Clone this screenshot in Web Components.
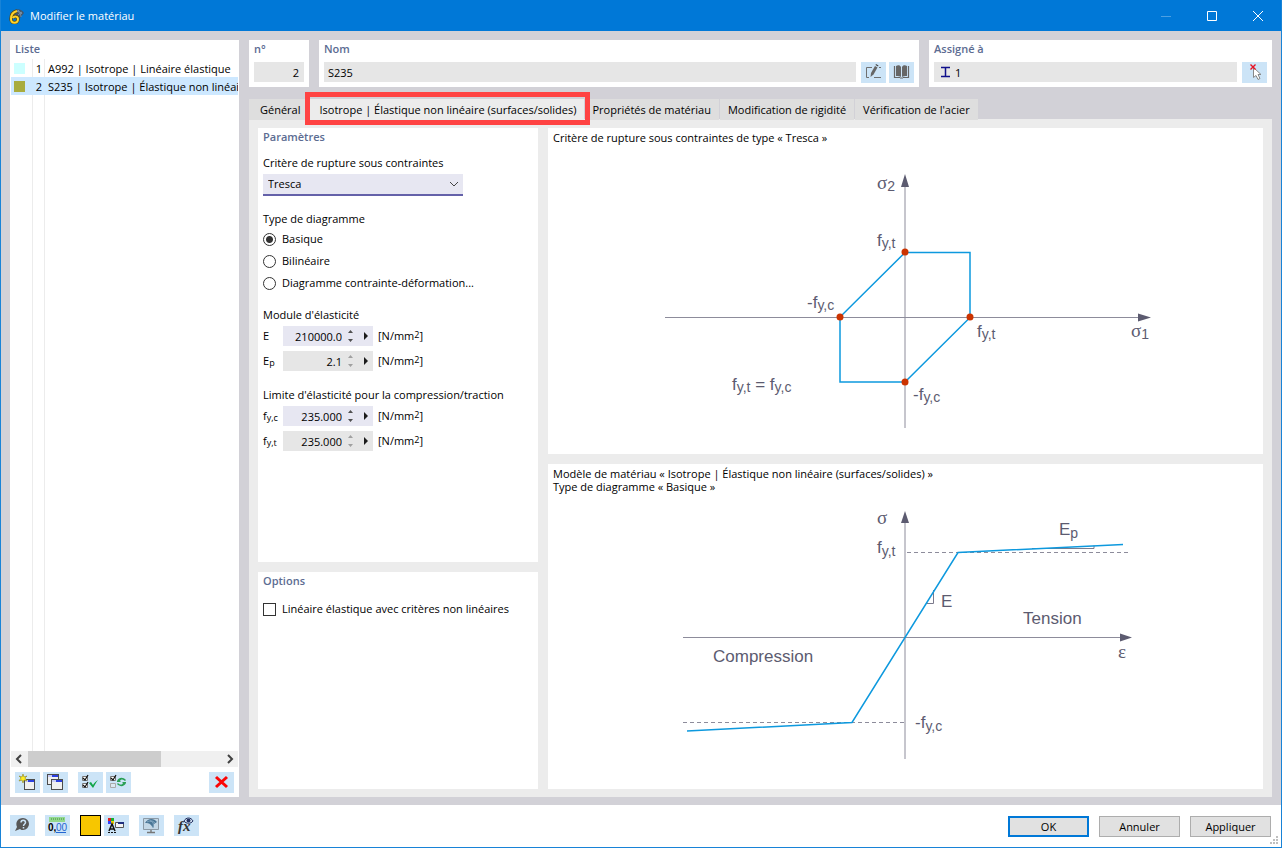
<!DOCTYPE html>
<html lang="fr">
<head>
<meta charset="utf-8">
<meta name="viewport" content="width=device-width, initial-scale=1">
<title>Modifier le matériau</title>
<style>
    body {
        margin: 0;
        font-family: "Open Sans", "Noto Sans", sans-serif;
        font-size: 11px;
        line-height: 18px;
        color: #000;
    }
</style>
</head>
<body>
<material-dialog></material-dialog>

<script>
    // Icons are drawn on the 25x21 face of a tool button
    const ICONS = {
        create: `
            <rect x="9.500" y="7.500" width="10" height="10" fill="#f0f0f0" stroke="#4c4c4c"/>
            <path d="M10 8h3v2h-3z" fill="#c9cdf5"/><path d="M13 8h6v2h-6z" fill="#2c40e0"/>
            <path d="M8 2l1 3 3-1-2 2 2 3-3-1-1 3-1-3-3 1 2-3-2-2 3 1z" fill="#ffee22" stroke="#8a8320" stroke-width=".6"/>`,
        copy: `
            <rect x="4.500" y="2.500" width="11" height="10" fill="#f0f0f0" stroke="#4c4c4c"/>
            <path d="M5 3h4v2H5z" fill="#c9cdf5"/><path d="M9 3h6v2H9z" fill="#2c40e0"/>
            <rect x="8.500" y="7.500" width="11" height="10" fill="#f0f0f0" stroke="#4c4c4c"/>
            <path d="M9 8h4v2H9z" fill="#c9cdf5"/><path d="M13 8h6v2h-6z" fill="#2c40e0"/>`,
        checkAll: `
            <path d="M4.500 4.500h5v4h-5zM4.500 11.500h5v4h-5z" fill="#fff" stroke="#777"/>
            <path d="M5 6l2 2 3-5M5 13l2 2 3-5" fill="none" stroke="#111" stroke-width="1.200"/>
            <path d="M11 11l2-1 2 3c1-2 3-4 5-5-2 2-3 5-5 8z" fill="#12a548"/>`,
        checkSwap: `
            <path d="M4.500 4.500h5v4h-5z" fill="#fff" stroke="#777"/>
            <path d="M4.500 11.500h5v4h-5z" fill="#dce9f3" stroke="#aaa"/>
            <path d="M5 6l2 2 3-5" fill="none" stroke="#111" stroke-width="1.200"/>
            <path d="M11 9c2-4 6-4 9-1l-1 1c-2-2-4-2-5 0l1 1h-4V6zM20 11c-2 4-6 4-9 1l1-1c2 2 4 2 5 0l-1-1h4v4z" fill="#2ba055"/>`,
        remove: `<path d="M7 5l11 10M18 5L7 15" stroke="#fb0505" stroke-width="3" fill="none"/>`,
        rename: `
            <path d="M11 5.500H5.500v10H8M13 15.500h7M18 5.500h2" fill="none" stroke="#707070"/>
            <path d="M10 11l4-7 2.500 1.500-4 7-3 2.500z" fill="#666"/>
            <path d="M14.500 3l.5-1 2.500 1.500-.5 1z" fill="#444"/>`,
        library: `
            <path d="M7 4c2-1 4-1 5 1v10c-1-1-3-1-5-1zM18 4c-2-1-4-1-5 1v10c1-1 3-1 5-1z" fill="#666"/>
            <path d="M5.500 4v11.500h5.500M19.500 4v11.500H14M11 16h3" fill="none" stroke="#666" stroke-width="1.200"/>`,
        unpick: `
            <path d="M11.500 5.500v10l2.500-2 2 4 2-1-2-4h3z" fill="#fff" stroke="#888"/>
            <path d="M8.500 2.500l5 5M13.500 2.500l-5 5" stroke="#e81123" stroke-width="1.400"/>`,
        help: `
            <path d="M13 3a6 6 0 0 1 0 12c-1 0-2 0-3-1l-5 2 2-4C5 7 8 3 13 3z" fill="#585858"/>
            <path d="M11 7.500c0-3 4.500-3 4.500 0 0 1.500-2 1.500-2 3.500M13.500 12v1.500" fill="none" stroke="#cce4f7" stroke-width="1.500"/>`,
        units: `
            <path d="M4 2h16v5H4z" fill="#93d98d"/>
            <path d="M6.500 3v2M8.500 3v2M10.500 3v2M12.500 3v2M14.500 3v2M16.500 3v2M18.500 3v2" stroke="#5da759" stroke-width=".8"/>
            <text x="3" y="16" font-size="10" font-weight="700" font-family="Liberation Sans, sans-serif">0,</text>
            <text x="11" y="16" font-size="10" font-family="Liberation Sans, sans-serif" fill="#2366d1">00</text>
            <path d="M11 17.500h10" stroke="#2366d1"/>`,
        display: `
            <path d="M4 3h3v3H4z" fill="#e02020"/><path d="M7 3h3v3H7z" fill="#16b030"/>
            <path d="M4 6h3v3H4z" fill="#3040ff"/><path d="M7 6h3v3H7z" fill="#f0d000"/>
            <path d="M5 16l3-7 3 7M6 14h4" fill="none" stroke="#111" stroke-width="1.500"/>
            <path d="M4 17.500h8" stroke="#111" stroke-dasharray="2 1"/>
            <path d="M11.500 7.500h8v5h-8z" fill="#f4f4f4" stroke="#555"/>
            <path d="M14 7h6v2h-6z" fill="#203080"/>`,
        view: `
            <path d="M4.500 3.500h15v11h-15z" fill="#c3d7e6" stroke="#8b99a5"/>
            <path d="M12 15v3M8 17.500h8" stroke="#777" stroke-width="1.400" fill="none"/>
            <path d="M6 8c3-5 9-5 12-1l-3 2c0 2 0 3-1 4l-2-3c-2-2-4-2-6-2z" fill="#4a7696"/>
            <path d="M8 7c4-2 6-1 8 1M11 6c3 0 4 3 3 6" fill="none" stroke="#a6c6dc" stroke-width=".6"/>`,
        formula: `
            <text x="4" y="16" font-size="15" font-weight="700" font-style="italic" font-family="Liberation Serif, serif" fill="#333">fx</text>
            <path d="M10 6c2-4 7-4 9 0-2 3-7 3-9 0z" fill="#d6e4f4" stroke="#223060"/>
            <circle cx="14.500" cy="5.500" r="2" fill="#223060"/>`
    };

    class ToolButton extends HTMLElement {
        connectedCallback() {
            this.attachShadow({ mode: 'open' });

            this.shadowRoot.innerHTML = `
                <style>
                    :host {
                        display: block;
                        flex: none;
                    }

                    button {
                        display: block;
                        width: 25px;
                        height: 21px;
                        padding: 0;
                        border: 0;
                        background: #cce4f7;
                    }

                    button:hover {
                        background: #b5d8f3;
                    }

                    svg {
                        display: block;
                    }
                </style>

                <button type="button" aria-label="${this.getAttribute('label')}">
                    <svg width="25" height="21" viewBox="0 0 25 21">${ICONS[this.getAttribute('icon')]}</svg>
                </button>
            `;
        }
    }

    class TitleBar extends HTMLElement {
        connectedCallback() {
            this.attachShadow({ mode: 'open' });

            this.shadowRoot.innerHTML = `
                <style>
                    :host {
                        display: flex;
                        align-items: center;
                        height: 31px;
                        padding-left: 8px;
                        gap: 5px;
                        background: #0078d7;
                        color: #fff;
                    }

                    h1 {
                        flex: 1;
                        margin: 0;
                        font-size: 11px;
                        font-weight: 400;
                    }

                    button {
                        width: 46px;
                        height: 31px;
                        padding: 0;
                        border: 0;
                        background: none;
                        color: #fff;
                    }

                    button:disabled {
                        color: #4ca0e3;
                    }

                    .controls {
                        display: flex;
                    }

                    svg {
                        display: block;
                        margin: auto;
                    }
                </style>

                <svg style="margin: 0" width="16" height="16" viewBox="0 0 16 16">
                    <path d="M3 6C5 0 12 0 15 5l-4 5z" fill="#41576d"/>
                    <path d="M4 6c3-4 6-4 9 0M7 3c3 0 5 3 5 6M10 2L7 5M13 4l-4 3" fill="none" stroke="#92a8ba" stroke-width=".7"/>
                    <path d="M8 3C4 4 2 7 2 11c0 5 7 5 7 0 0-3-4-3-5-1" fill="none" stroke="#5b4a10" stroke-width="3.500"/>
                    <path d="M8 3C4 4 2 7 2 11c0 5 7 5 7 0 0-3-4-3-5-1" fill="none" stroke="#ffd42a" stroke-width="2"/>
                </svg>
                <h1><slot></slot></h1>
                <div class="controls">
                    <button type="button" aria-label="Réduire" disabled>
                        <svg width="10" height="10"><path d="M0 5.500h10" stroke="currentColor"/></svg>
                    </button>
                    <button type="button" aria-label="Agrandir">
                        <svg width="10" height="10"><path d="M.5.500h9v9h-9z" fill="none" stroke="currentColor"/></svg>
                    </button>
                    <button type="button" aria-label="Fermer">
                        <svg width="10" height="10"><path d="M0 0l10 10M10 0L0 10" stroke="currentColor"/></svg>
                    </button>
                </div>
            `;
        }
    }

    class PanelCard extends HTMLElement {
        connectedCallback() {
            this.attachShadow({ mode: 'open' });

            this.shadowRoot.innerHTML = `
                <style>
                    :host {
                        display: flex;
                        flex-direction: column;
                        min-width: 0;
                        padding: 0 5px 4px;
                        box-sizing: border-box;
                        background: #fff;
                    }

                    h2 {
                        margin: 0;
                        font-size: 11px;
                        line-height: 18px;
                        font-weight: 600;
                        color: #5c6c92;
                    }
                </style>

                <h2>${this.getAttribute('heading')}</h2>
                <slot></slot>
            `;
        }
    }

    class TextField extends HTMLElement {
        connectedCallback() {
            this.attachShadow({ mode: 'open' });

            this.shadowRoot.innerHTML = `
                <style>
                    :host {
                        display: flex;
                        align-items: center;
                        flex: 1;
                        min-width: 0;
                        height: 20px;
                        background: #e6e6e6;
                    }

                    ::slotted(svg) {
                        flex: none;
                        margin-left: 6px;
                    }

                    input {
                        flex: 1;
                        min-width: 0;
                        height: 20px;
                        box-sizing: border-box;
                        padding: 0 5px 0 4px;
                        border: 0;
                        background: none;
                        font: inherit;
                        color: inherit;
                        text-align: inherit;
                    }
                </style>

                <slot></slot>
                <input type="text" readonly aria-label="${this.getAttribute('label')}" value="${this.getAttribute('value')}">
            `;
        }
    }

    class MaterialList extends HTMLElement {
        connectedCallback() {
            this.attachShadow({ mode: 'open' });

            this.shadowRoot.innerHTML = `
                <style>
                    :host {
                        display: flex;
                        flex-direction: column;
                        min-height: 0;
                        background: #fff;
                    }

                    h2 {
                        margin: 0;
                        padding: 0 5px 1px;
                        font-size: 11px;
                        line-height: 18px;
                        font-weight: 600;
                        color: #5c6c92;
                    }

                    /* column rules run down the whole list */
                    .rows {
                        flex: 1;
                        margin: 0 1px;
                        overflow: hidden;
                        background:
                            linear-gradient(#ececec, #ececec) 21px 0 / 1px 100% no-repeat,
                            linear-gradient(#ececec, #ececec) 33px 0 / 1px 100% no-repeat;
                    }

                    table {
                        width: 100%;
                        table-layout: fixed;
                        border-collapse: collapse;
                    }

                    td {
                        height: 18px;
                        padding: 2px 0 0;
                        box-sizing: border-box;
                        line-height: 16px;
                        white-space: nowrap;
                        overflow: hidden;
                    }

                    .color { padding: 0; }
                    .number { text-align: right; }
                    .name { padding-left: 6px; }

                    .color i {
                        display: block;
                        width: 11px;
                        height: 11px;
                        margin-left: 3px;
                    }

                    .selected {
                        background: #cde8ff;
                    }

                    .scroll {
                        display: flex;
                        align-items: center;
                        height: 16px;
                        margin: 0 1px;
                        background: #f0f0f0;
                    }

                    .track {
                        flex: 1;
                        height: 16px;
                    }

                    .thumb {
                        width: 69%;
                        height: 16px;
                        background: #cdcdcd;
                    }

                    .tools {
                        display: flex;
                        gap: 3px;
                        padding: 5px 5px 4px;
                    }

                    .gap { margin-left: 7px; }
                    .end { margin-left: auto; }
                </style>

                <h2>Liste</h2>
                <div class="rows">
                    <table>
                        <colgroup><col style="width: 21px"><col style="width: 10px"><col></colgroup>
                        <tr>
                            <td class="color"><i style="background: #ccffff"></i></td>
                            <td class="number">1</td>
                            <td class="name">A992 | Isotrope | Linéaire élastique</td>
                        </tr>
                        <tr class="selected">
                            <td class="color"><i style="background: #a9ac3e"></i></td>
                            <td class="number">2</td>
                            <td class="name">S235 | Isotrope | Élastique non linéaire (surfaces/solides)</td>
                        </tr>
                    </table>
                </div>
                <div class="scroll">
                    <svg width="17" height="16"><path d="M10 4L6 8l4 4" fill="none" stroke="#404040" stroke-width="2"/></svg>
                    <div class="track"><div class="thumb"></div></div>
                    <svg width="17" height="16"><path d="M7 4l4 4-4 4" fill="none" stroke="#404040" stroke-width="2"/></svg>
                </div>
                <div class="tools">
                    <tool-button icon="create" label="Nouveau matériau"></tool-button>
                    <tool-button icon="copy" label="Copier"></tool-button>
                    <tool-button class="gap" icon="checkAll" label="Tout sélectionner"></tool-button>
                    <tool-button icon="checkSwap" label="Inverser la sélection"></tool-button>
                    <tool-button class="end" icon="remove" label="Supprimer"></tool-button>
                </div>
            `;
        }
    }

    class TabStrip extends HTMLElement {
        connectedCallback() {
            this.attachShadow({ mode: 'open' });

            this.shadowRoot.innerHTML = `
                <style>
                    :host {
                        position: relative;
                        z-index: 1;
                        display: flex;
                        gap: 1px;
                    }

                    button {
                        position: relative;
                        height: 21px;
                        padding: 0 8px;
                        border: 0;
                        background: #dedede;
                        font: inherit;
                        color: inherit;
                        white-space: nowrap;
                    }

                    .first {
                        padding-left: 11px;
                    }

                    button[aria-selected="true"] {
                        z-index: 1;
                        padding: 0 7px 0 10px;
                        background: #ececec;
                    }

                    /* red frame over the active tab */
                    button[aria-selected="true"]::after {
                        content: "";
                        position: absolute;
                        inset: -7px -6px -5px -4px;
                        border: 5px solid #ff4343;
                    }
                </style>

                <button class="first" type="button" role="tab">Général</button>
                <button type="button" role="tab" aria-selected="true">Isotrope | Élastique non linéaire (surfaces/solides)</button>
                <button type="button" role="tab">Propriétés de matériau</button>
                <button type="button" role="tab">Modification de rigidité</button>
                <button type="button" role="tab">Vérification de l'acier</button>
            `;
        }
    }

    class NumberField extends HTMLElement {
        connectedCallback() {
            const off = this.hasAttribute('off');
            const arrow = off ? '#a0a0a0' : '#505050';

            this.attachShadow({ mode: 'open' });

            this.shadowRoot.innerHTML = `
                <style>
                    :host {
                        display: flex;
                        align-items: center;
                        height: 20px;
                        margin-bottom: 5px;
                    }

                    label {
                        width: 20px;
                    }

                    .box {
                        display: flex;
                        width: 90px;
                        height: 20px;
                        margin-right: 5px;
                        background: ${off ? '#e6e6e6' : '#e7e7f2'};
                    }

                    input {
                        width: 60px;
                        height: 20px;
                        box-sizing: border-box;
                        padding: 0 1px 0 0;
                        border: 0;
                        background: none;
                        font: inherit;
                        color: inherit;
                        text-align: right;
                    }

                    button {
                        width: 15px;
                        height: 20px;
                        padding: 0;
                        border: 0;
                        background: none;
                    }

                    svg {
                        display: block;
                        margin: auto;
                    }

                    ::slotted(sub), sup {
                        font-size: 9px;
                        line-height: 0;
                    }

                    ::slotted(sub) { vertical-align: -1px; }
                    sup { vertical-align: 2px; }
                </style>

                <label for="value"><slot></slot></label>
                <div class="box">
                    <input id="value" type="text" value="${this.getAttribute('value')}">
                    <button type="button" aria-label="Pas">
                        <svg width="5" height="14"><path d="M0 4l2.500-3L5 4zM0 10l2.500 3L5 10z" fill="${arrow}"/></svg>
                    </button>
                    <button type="button" aria-label="Options">
                        <svg width="5" height="8"><path d="M1 0l4 4-4 4z" fill="#1c1c1c"/></svg>
                    </button>
                </div>
                <span>[N/mm<sup>2</sup>]</span>
            `;
        }
    }

    class ChoiceOption extends HTMLElement {
        connectedCallback() {
            const type = this.getAttribute('type');

            this.attachShadow({ mode: 'open' });

            this.shadowRoot.innerHTML = `
                <style>
                    :host {
                        display: block;
                    }

                    label {
                        display: flex;
                        align-items: center;
                        gap: 6px;
                        height: 22px;
                    }

                    input {
                        appearance: none;
                        width: 13px;
                        height: 13px;
                        box-sizing: border-box;
                        margin: 0;
                        border: 1px solid #333;
                        background: #fff;
                    }

                    input[type="radio"] {
                        border-radius: 50%;
                    }

                    input:checked {
                        background: radial-gradient(circle, #333 3px, #fff 4px);
                    }
                </style>

                <label><input type="${type}"${this.hasAttribute('checked') ? ' checked' : ''}><slot></slot></label>
            `;
        }
    }

    class MaterialParameters extends HTMLElement {
        connectedCallback() {
            this.attachShadow({ mode: 'open' });

            this.shadowRoot.innerHTML = `
                <style>
                    :host {
                        display: block;
                        padding-top: 8px;
                    }

                    .label {
                        display: block;
                        margin-bottom: 2px;
                    }

                    .type { margin: 14px 0 0; }
                    .module { margin-top: 12px; }
                    .limit { margin-top: 15px; }

                    /* the chevron shares the grid cell of the select */
                    .combo {
                        display: grid;
                        width: 200px;
                        align-items: center;
                    }

                    .combo > * {
                        grid-area: 1 / 1;
                    }

                    .combo svg {
                        justify-self: end;
                        margin: 0 4px 2px 0;
                        pointer-events: none;
                    }

                    select {
                        appearance: none;
                        width: 100%;
                        height: 22px;
                        padding: 0 5px;
                        border: 0;
                        border-bottom: 2px solid #6461a9;
                        border-radius: 0;
                        background: #e7e7f2;
                        font: inherit;
                        color: inherit;
                    }
                </style>

                <label class="label" for="criterion">Critère de rupture sous contraintes</label>
                <div class="combo">
                    <select id="criterion"><option>Tresca</option><option>von Mises</option></select>
                    <svg width="10" height="8"><path d="M1 2l4 4 4-4" fill="none" stroke="#444"/></svg>
                </div>

                <div class="label type">Type de diagramme</div>
                <choice-option type="radio" checked>Basique</choice-option>
                <choice-option type="radio">Bilinéaire</choice-option>
                <choice-option type="radio">Diagramme contrainte-déformation...</choice-option>

                <div class="label module">Module d'élasticité</div>
                <number-field value="210000.0">E</number-field>
                <number-field value="2.1" off>E<sub>p</sub></number-field>

                <div class="label limit">Limite d'élasticité pour la compression/traction</div>
                <number-field value="235.000">f<sub>y,c</sub></number-field>
                <number-field value="235.000" off>f<sub>y,t</sub></number-field>
            `;
        }
    }

    // Shared look of both diagrams: axes, curves and labels
    const DIAGRAM_STYLE = `
        <style>
            :host {
                display: flex;
                flex-direction: column;
                flex: 1 1 auto;
                min-height: 0;
                background: #fff;
            }

            p {
                margin: 0;
                padding: 3px 5px 4px;
                line-height: 13px;
            }

            svg {
                display: block;
                flex: 1 1 auto;
                width: 100%;
                font-family: "Liberation Sans", sans-serif;
                font-size: 17px;
                fill: #5c5b70;
            }

            .axis { fill: none; stroke: #8d8c9b; }
            .curve { fill: none; stroke: #0d99de; stroke-width: 1.500; }
            .dash { fill: none; stroke: #8d8c9b; stroke-dasharray: 4 3; }
            .thin { fill: none; stroke: #7b7a8c; }
            .dots { fill: #cc3300; }
            .sub { font-size: 14px; }
            .greek { font-family: "Liberation Serif", serif; font-size: 19px; }
        </style>
    `;

    class TrescaDiagram extends HTMLElement {
        connectedCallback() {
            this.attachShadow({ mode: 'open' });

            this.shadowRoot.innerHTML = `
                ${DIAGRAM_STYLE}
                <p>Critère de rupture sous contraintes de type « Tresca »</p>
                <svg height="306" viewBox="0 0 715 306">
                    <path class="axis" d="M117 169.500h476M357 38v242"/>
                    <path d="M603 169.500l-13-4v8zM357 26l-4 13h8z"/>
                    <path class="curve" d="M357 104.500h65v65l-65 64.500h-65v-65z"/>
                    <g class="dots">
                        <circle cx="357" cy="104" r="3.500"/>
                        <circle cx="292" cy="169" r="3.500"/>
                        <circle cx="422" cy="169" r="3.500"/>
                        <circle cx="357" cy="234" r="3.500"/>
                    </g>
                    <text x="329" y="41"><tspan class="greek">σ</tspan><tspan class="sub" dy="2">2</tspan></text>
                    <text x="583" y="189"><tspan class="greek">σ</tspan><tspan class="sub" dy="2">1</tspan></text>
                    <text x="329" y="98">f<tspan class="sub" dy="2">y,t</tspan></text>
                    <text x="259" y="160">-f<tspan class="sub" dy="2">y,c</tspan></text>
                    <text x="429" y="189">f<tspan class="sub" dy="2">y,t</tspan></text>
                    <text x="365" y="252">-f<tspan class="sub" dy="2">y,c</tspan></text>
                    <text x="184" y="242">f<tspan class="sub" dy="2">y,t</tspan><tspan dy="-2"> = f</tspan><tspan class="sub" dy="2">y,c</tspan></text>
                </svg>
            `;
        }
    }

    class StrainDiagram extends HTMLElement {
        connectedCallback() {
            this.attachShadow({ mode: 'open' });

            this.shadowRoot.innerHTML = `
                ${DIAGRAM_STYLE}
                <p>Modèle de matériau « Isotrope | Élastique non linéaire (surfaces/solides) »<br>Type de diagramme « Basique »</p>
                <svg height="292" viewBox="0 0 715 292">
                    <path class="axis" d="M135 140.500h438M357 26v236"/>
                    <path d="M584 140.500l-12-4v8zM357 14l-4 12h8z"/>
                    <path class="dash" d="M359 55.500h221M135 225.500h221"/>
                    <path class="thin" d="M378 106.500h7.500V93M484 51.500h62v-3"/>
                    <path class="curve" d="M139 234l165-8.500 106-170 165-8"/>
                    <text class="greek" x="329" y="27">σ</text>
                    <text class="greek" x="570" y="161">ε</text>
                    <text x="329" y="56">f<tspan class="sub" dy="3">y,t</tspan></text>
                    <text x="367" y="231">-f<tspan class="sub" dy="3">y,c</tspan></text>
                    <text x="511" y="38">E<tspan class="sub" dy="3">p</tspan></text>
                    <text x="393" y="110">E</text>
                    <text x="475" y="127">Tension</text>
                    <text x="165" y="165">Compression</text>
                </svg>
            `;
        }
    }

    class DialogFooter extends HTMLElement {
        connectedCallback() {
            this.attachShadow({ mode: 'open' });

            this.shadowRoot.innerHTML = `
                <style>
                    :host {
                        position: relative;
                        display: flex;
                        justify-content: space-between;
                        padding: 10px 10px 10px 9px;
                        background: #fff;
                    }

                    .tools, .actions {
                        display: flex;
                        gap: 10px;
                    }

                    .actions {
                        padding-top: 1px;
                    }

                    .group {
                        display: flex;
                        gap: 3px;
                    }

                    .color {
                        width: 21px;
                        height: 21px;
                        padding: 0;
                        border: 1px solid #000;
                        background: #f7c600;
                    }

                    .action {
                        width: 81px;
                        height: 21px;
                        padding: 0;
                        border: 1px solid #adadad;
                        background: #e1e1e1;
                        font: inherit;
                        color: inherit;
                    }

                    .ok {
                        border-color: #0078d7;
                        box-shadow: inset 0 0 0 1px #0078d7;
                    }

                    .grip {
                        position: absolute;
                        right: 2px;
                        bottom: 2px;
                    }
                </style>

                <div class="tools">
                    <tool-button icon="help" label="Aide"></tool-button>
                    <tool-button icon="units" label="Unités"></tool-button>
                    <div class="group">
                        <button class="color" type="button" aria-label="Couleur"></button>
                        <tool-button icon="display" label="Affichage"></tool-button>
                    </div>
                    <tool-button icon="view" label="Vue"></tool-button>
                    <tool-button icon="formula" label="Formules"></tool-button>
                </div>
                <div class="actions">
                    <button class="action ok" type="button">OK</button>
                    <button class="action" type="button">Annuler</button>
                    <button class="action" type="button">Appliquer</button>
                </div>
                <svg class="grip" width="9" height="9" fill="#bfbfbf">
                    <path d="M6 0h2v2H6zM3 3h2v2H3zM6 3h2v2H6zM0 6h2v2H0zM3 6h2v2H3zM6 6h2v2H6z"/>
                </svg>
            `;
        }
    }

    class MaterialDialog extends HTMLElement {
        connectedCallback() {
            this.attachShadow({ mode: 'open' });

            this.shadowRoot.innerHTML = `
                <style>
                    :host {
                        display: flex;
                        flex-direction: column;
                        min-height: 100vh;
                        box-sizing: border-box;
                        border: 1px solid #1883d7;
                        border-top: 0;
                    }

                    main {
                        flex: 1;
                        display: grid;
                        grid-template-columns: 229px minmax(0, 1fr);
                        gap: 10px;
                        padding: 9px 9px 8px;
                        background: #d2d1d7;
                    }

                    .editor {
                        display: flex;
                        flex-direction: column;
                        min-width: 0;
                    }

                    .head {
                        display: grid;
                        grid-template-columns: 60px minmax(0, 1fr) 343px;
                        gap: 10px;
                        margin-bottom: 12px;
                    }

                    .line {
                        display: flex;
                        height: 21px;
                        margin-top: 4px;
                    }

                    .line tool-button { margin-left: 5px; }
                    .line tool-button + tool-button { margin-left: 3px; }
                    .number { text-align: right; }

                    .page {
                        flex: 1;
                        display: grid;
                        grid-template-columns: 280px minmax(0, 1fr);
                        gap: 10px;
                        margin-top: -1px;
                        padding: 9px 9px 8px;
                        background: #ececec;
                    }

                    .settings {
                        display: grid;
                        grid-template-rows: 2fr 1fr;
                        gap: 10px;
                    }

                    .diagrams {
                        display: flex;
                        flex-direction: column;
                        gap: 10px;
                    }

                    .settings choice-option {
                        margin-top: 8px;
                    }
                </style>

                <title-bar>Modifier le matériau</title-bar>
                <main>
                    <material-list></material-list>
                    <div class="editor">
                        <div class="head">
                            <panel-card heading="n°">
                                <div class="line number"><text-field label="n°" value="2"></text-field></div>
                            </panel-card>
                            <panel-card heading="Nom">
                                <div class="line">
                                    <text-field label="Nom" value="S235"></text-field>
                                    <tool-button icon="rename" label="Modifier le nom"></tool-button>
                                    <tool-button icon="library" label="Bibliothèque"></tool-button>
                                </div>
                            </panel-card>
                            <panel-card heading="Assigné à">
                                <div class="line">
                                    <text-field label="Assigné à" value="1">
                                        <svg width="11" height="12"><path d="M1 1.500h9M1 10.500h9M5.500 1v10" stroke="#10108c" stroke-width="1.500"/></svg>
                                    </text-field>
                                    <tool-button icon="unpick" label="Désélectionner"></tool-button>
                                </div>
                            </panel-card>
                        </div>
                        <tab-strip></tab-strip>
                        <div class="page">
                            <div class="settings">
                                <panel-card heading="Paramètres"><material-parameters></material-parameters></panel-card>
                                <panel-card heading="Options">
                                    <choice-option type="checkbox">Linéaire élastique avec critères non linéaires</choice-option>
                                </panel-card>
                            </div>
                            <div class="diagrams">
                                <tresca-diagram></tresca-diagram>
                                <strain-diagram></strain-diagram>
                            </div>
                        </div>
                    </div>
                </main>
                <dialog-footer></dialog-footer>
            `;
        }
    }

    customElements.define('tool-button', ToolButton);
    customElements.define('title-bar', TitleBar);
    customElements.define('panel-card', PanelCard);
    customElements.define('text-field', TextField);
    customElements.define('material-list', MaterialList);
    customElements.define('tab-strip', TabStrip);
    customElements.define('number-field', NumberField);
    customElements.define('choice-option', ChoiceOption);
    customElements.define('material-parameters', MaterialParameters);
    customElements.define('tresca-diagram', TrescaDiagram);
    customElements.define('strain-diagram', StrainDiagram);
    customElements.define('dialog-footer', DialogFooter);
    customElements.define('material-dialog', MaterialDialog);
</script>
</body>
</html>
